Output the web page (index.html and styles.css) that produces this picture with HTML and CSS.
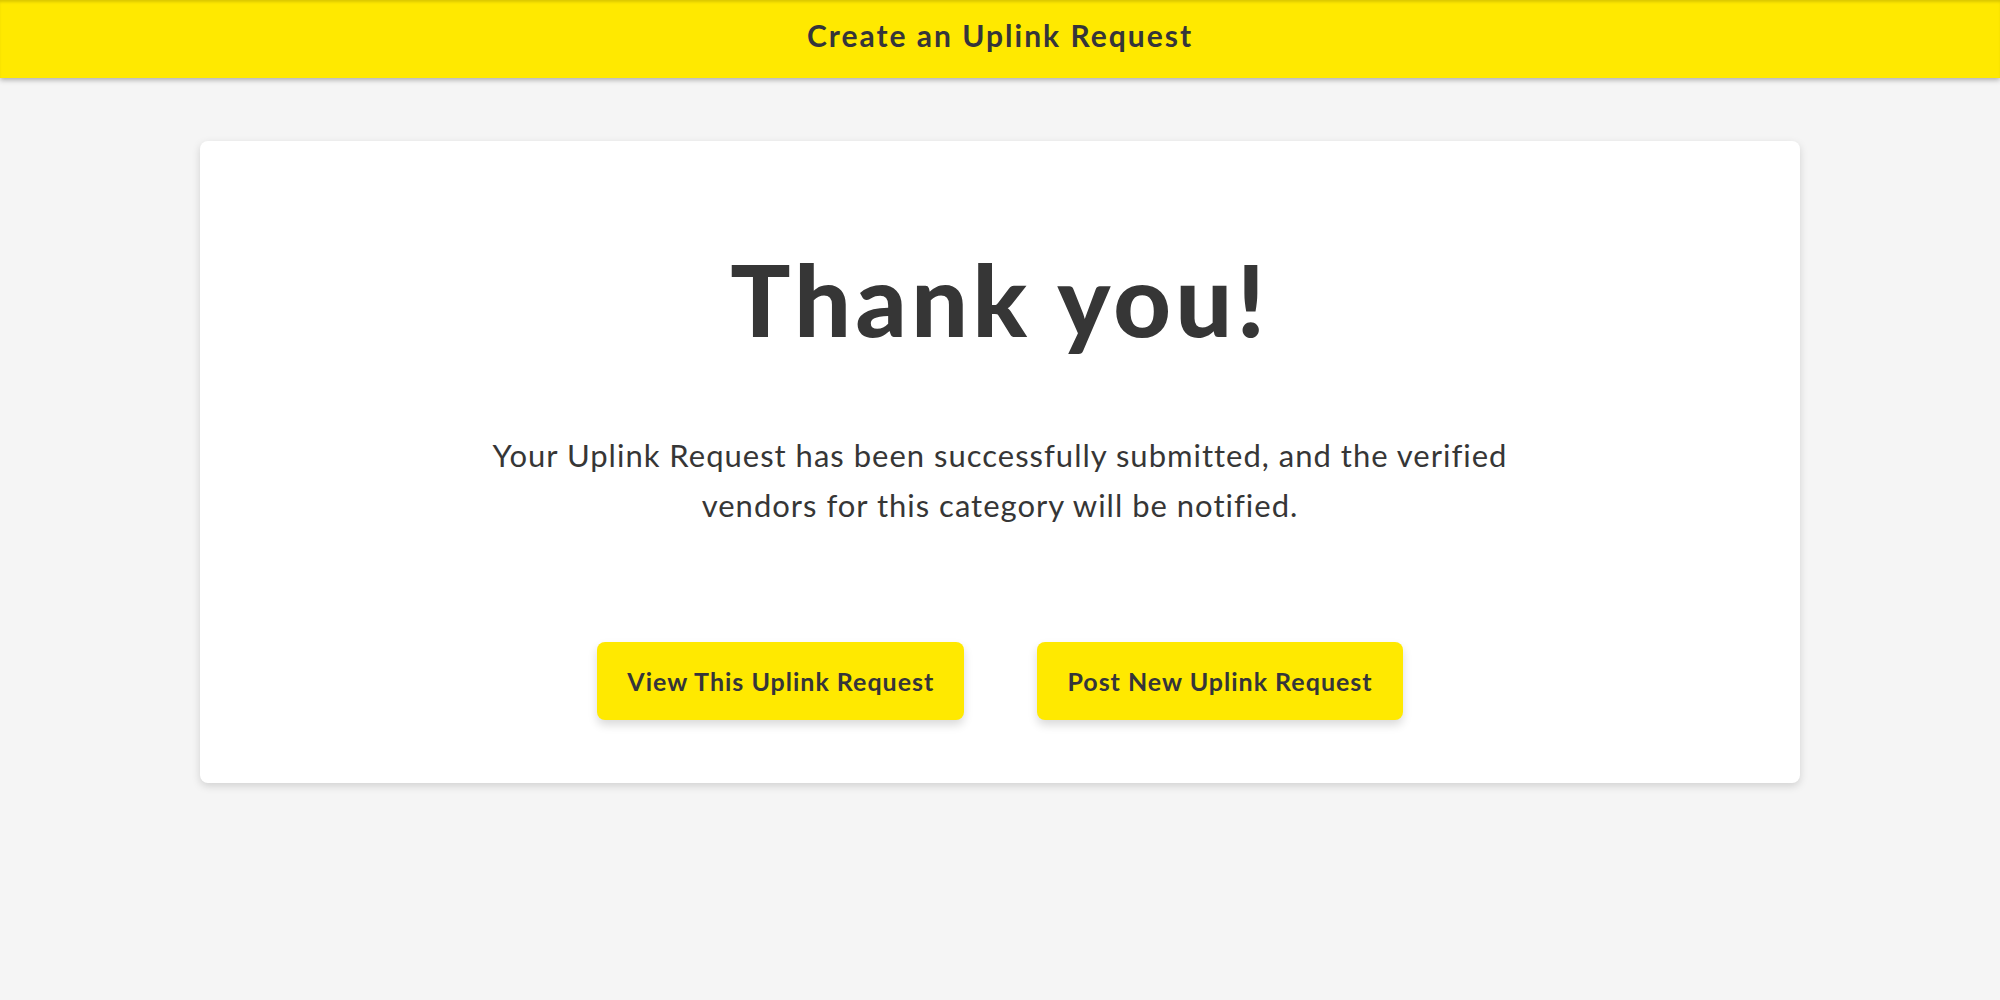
FILE: index.html
```html
<html>
<head>
    <title>Create an Uplink Request</title>
    <link rel="stylesheet" href="styles.css">
</head>
<body>
    <header class="topbar">
        <h1>Create an Uplink Request</h1>
    </header>

    <div class="page">
        <main class="card">
            <h2 class="thanks">Thank you!</h2>
            <p class="message">Your Uplink Request has been successfully submitted, and the verified<br>vendors for this category will be notified.</p>
            <div class="actions">
                <a href="#" class="btn">View This Uplink Request</a>
                <a href="#" class="btn">Post New Uplink Request</a>
            </div>
        </main>
    </div>
</body>
</html>
```

FILE: styles.css
```css
body {
    font-family: Lato, "Open Sans", sans-serif;
    margin: 0;
    padding: 0;
    background: #f5f5f5;
    color: #363636;
}

.topbar {
    height: 78px;
    box-sizing: border-box;
    padding-bottom: 8px;
    background: #ffe900;
    display: flex;
    align-items: center;
    justify-content: center;
    box-shadow: inset 0 3px 3px -1px rgba(0, 0, 0, 0.15), 0 2px 5px rgba(0, 0, 0, 0.3);
}

.topbar h1 {
    margin: 0;
    font-size: 30px;
    letter-spacing: 2px;
    font-weight: bold;
    color: #35353a;
}

.page {
    padding-top: 63px;
    display: flex;
    justify-content: center;
}

.card {
    width: 1600px;
    background: #ffffff;
    border-radius: 8px;
    box-shadow: 0 3px 8px rgba(0, 0, 0, 0.15);
    padding: 97px 0 63px;
    text-align: center;
}

.thanks {
    margin: 0;
    font-size: 100px;
    line-height: 1.2;
    font-weight: 900;
    letter-spacing: 4.5px;
}

.message {
    margin: 72px 0 0;
    font-size: 31px;
    line-height: 50px;
    letter-spacing: 1px;
}

.actions {
    margin-top: 112px;
    display: flex;
    justify-content: center;
    gap: 73px;
}

.btn {
    display: inline-block;
    height: 78px;
    line-height: 78px;
    padding: 0 30px;
    background: #ffe900;
    color: #35353a;
    font-size: 25px;
    letter-spacing: 1px;
    font-weight: bold;
    text-decoration: none;
    border-radius: 8px;
    box-shadow: 0 5px 10px rgba(0, 0, 0, 0.15);
}
```
